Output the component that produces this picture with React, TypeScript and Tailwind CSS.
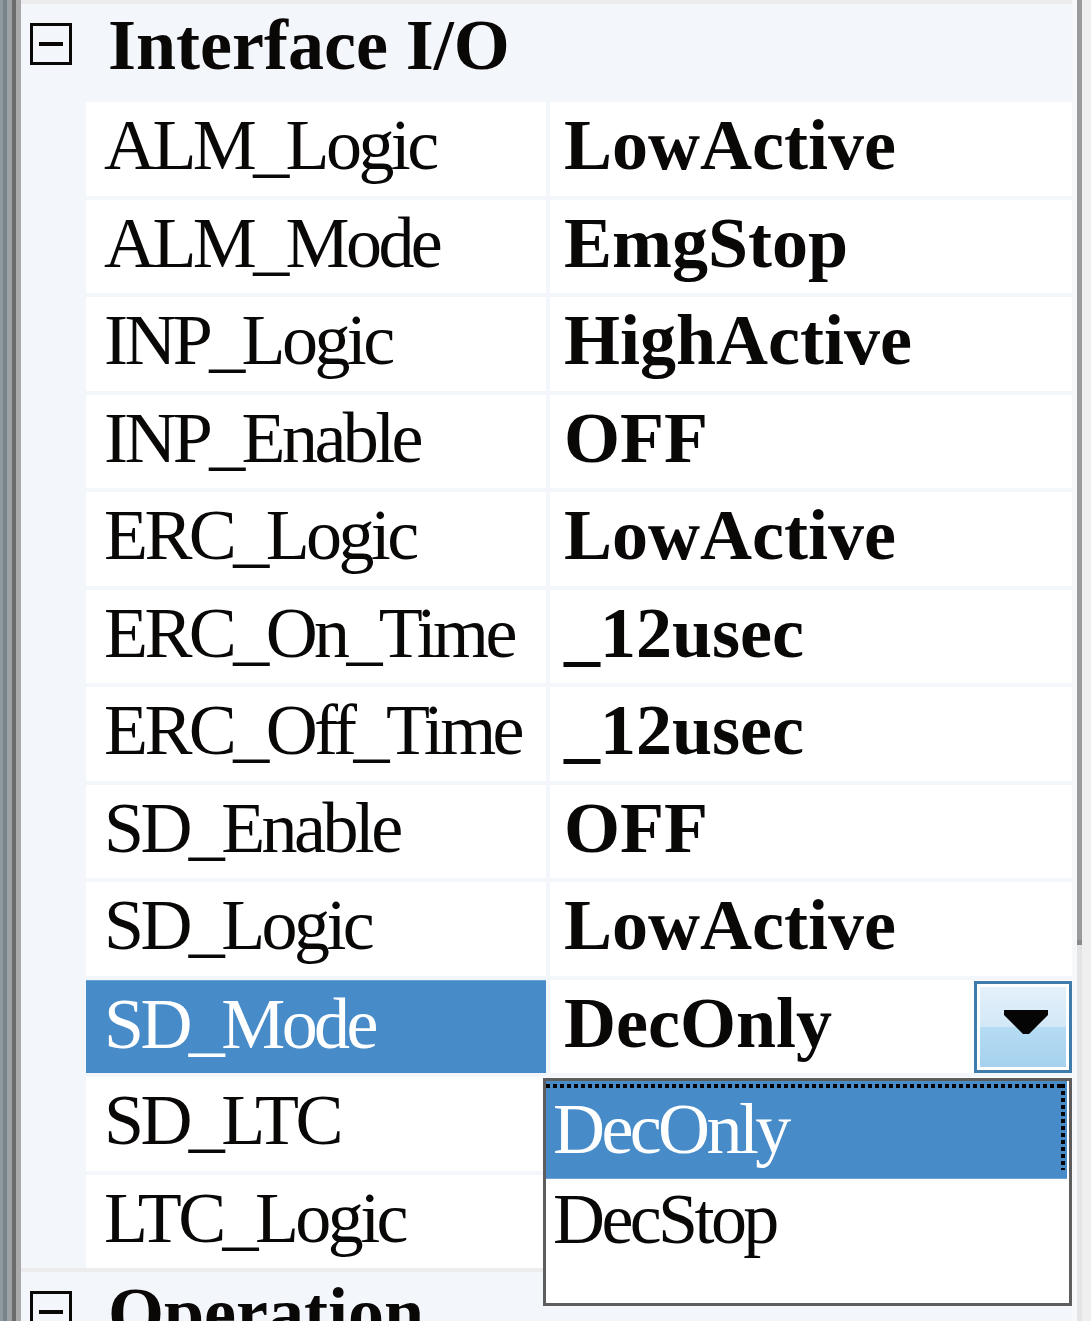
import React from 'react';

type Row = { name: string; value: string; selected?: boolean };

const rows: Row[] = [
  { name: 'ALM_Logic', value: 'LowActive' },
  { name: 'ALM_Mode', value: 'EmgStop' },
  { name: 'INP_Logic', value: 'HighActive' },
  { name: 'INP_Enable', value: 'OFF' },
  { name: 'ERC_Logic', value: 'LowActive' },
  { name: 'ERC_On_Time', value: '_12usec' },
  { name: 'ERC_Off_Time', value: '_12usec' },
  { name: 'SD_Enable', value: 'OFF' },
  { name: 'SD_Logic', value: 'LowActive' },
  { name: 'SD_Mode', value: 'DecOnly', selected: true },
  { name: 'SD_LTC', value: '' },
  { name: 'LTC_Logic', value: '' },
];

function MinusBox() {
  return (
    <div className="w-[42px] h-[42px] border-[3px] border-[#0a0707] flex items-center justify-center shrink-0">
      <div className="w-[24px] h-[4px] bg-[#0a0707]" />
    </div>
  );
}

function Category({ title }: { title: string }) {
  return (
    <div className="flex flex-col">
      <div className="h-[4px] bg-[#ececec]" />
      <div className="h-[94px] flex items-start pl-[9px] pt-[19px] gap-[36px]">
        <MinusBox />
        <span className="text-[72px] leading-none font-bold text-[#0a0707] -mt-[14px]">{title}</span>
      </div>
    </div>
  );
}

function DropButton() {
  return (
    <div className="w-[98px] h-[92px] self-end border-[3px] border-[#3f7bab] bg-white p-[3px] shrink-0">
      <div className="w-full h-full flex flex-col relative">
        <div className="h-1/2 bg-gradient-to-b from-[#e4f1fb] to-[#d2e8f7]" />
        <div className="h-1/2 bg-gradient-to-b from-[#b5dcf2] to-[#a6d1ee]" />
        <svg className="absolute left-[24px] top-[23px]" width="44" height="26" viewBox="0 0 44 26">
          <polygon points="0,0 44,0 44,5 25,24 19,24 0,5" fill="#050505" />
        </svg>
      </div>
    </div>
  );
}

function PropRow({ row }: { row: Row }) {
  return (
    <div className="flex h-[93.5px] pl-[65px] gap-[4px]">
      <div
        className={`w-[460px] h-full flex items-start pl-[18px] pt-[7px] ${
          row.selected ? 'bg-[#478bc9] text-white border-t border-[#6aa3d6]' : 'bg-white text-[#0a0707]'
        }`}
      >
        <span className="text-[72px] leading-none tracking-[-3.6px]">{row.name}</span>
      </div>
      <div className="flex-1 h-full bg-white flex items-start justify-between pl-[14px]">
        <span className="text-[72px] leading-none font-bold text-[#0a0707] pt-[7px]">{row.value}</span>
        {row.selected && <DropButton />}
      </div>
    </div>
  );
}

function DropList() {
  return (
    <div className="absolute left-[543px] top-[1078px] w-[529px] h-[228px] border-[3px] border-[#5e5e5e] bg-white flex flex-col">
      <div className="h-[98px] bg-[#478bc9] relative border-b border-[#6aa3d6] mr-[2px]">
        <div className="absolute left-0 right-[2px] top-[3px] h-[4px] bg-[repeating-linear-gradient(90deg,#000_0_4px,transparent_4px_7px)]" />
        <div className="absolute right-[2px] top-[3px] bottom-[8px] w-[4px] bg-[repeating-linear-gradient(180deg,#000_0_4px,transparent_4px_7px)]" />
        <span className="absolute left-[7px] top-[12px] text-[72px] leading-none tracking-[-3.6px] text-white">DecOnly</span>
      </div>
      <div className="h-[95px] relative">
        <span className="absolute left-[7px] top-[4px] text-[72px] leading-none tracking-[-3.6px] text-[#0a0707]">DecStop</span>
      </div>
    </div>
  );
}

export default function App() {
  return (
    <div className="relative w-[1091px] h-[1321px] overflow-hidden bg-[#f3f6fb] flex font-['Liberation_Serif',serif]">
      {/* splitter bars on the left */}
      <div className="flex h-full shrink-0">
        <div className="w-[3px] bg-[#8e989f]" />
        <div className="w-[4px] bg-[#79838a]" />
        <div className="w-[5px] bg-[#9ba1a5]" />
        <div className="w-[4px] bg-[#6b6b6b]" />
        <div className="w-[5px] bg-[#a9a9a9]" />
      </div>

      {/* grid */}
      <div className="w-[1051px] shrink-0 flex flex-col">
        <Category title="Interface I/O" />
        {rows.map((row) => (
          <div key={row.name} className="flex flex-col">
            <div className="h-[4px]" />
            <PropRow row={row} />
          </div>
        ))}
        <Category title="Operation" />
      </div>

      {/* right edge / scrollbar */}
      <div className="flex h-full shrink-0">
        <div className="w-[5px] bg-[#f7f8fa]" />
        <div className="w-[5px] flex flex-col">
          <div className="h-[940px] bg-[#9a9a9a]" />
          <div className="h-[5px] bg-[#8a8a8a]" />
          <div className="flex-1 bg-[#e4e4e4]" />
        </div>
        <div className="w-[9px] bg-[#efefef]" />
      </div>

      <DropList />
    </div>
  );
}
